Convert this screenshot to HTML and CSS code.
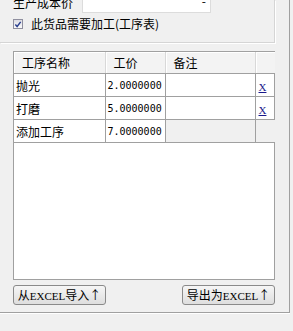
FILE: index.html
```html
<!DOCTYPE html>
<html lang="zh-CN">
<head>
    <meta charset="UTF-8">
    <meta name="viewport" content="width=device-width, initial-scale=1.0">
    <title>工序表</title>
    <link rel="stylesheet" href="styles.css">
</head>
<body>
    <div class="frame">
        <div class="top-group">
            <div class="cost-row">
                <span class="cost-label">生产成本价</span>
                <div class="cost-input"><span class="dash">-</span></div>
            </div>
            <label class="check-row">
                <span class="checkbox">
                    <svg width="9" height="9" viewBox="0 0 9 9"><path d="M1.5 4.5 L3.5 6.8 L7.5 1.5" fill="none" stroke="#2a3f8f" stroke-width="1.6"/></svg>
                </span>
                此货品需要加工(工序表)
            </label>
        </div>

        <div class="grid-box">
            <table class="grid">
                <colgroup>
                    <col class="c-name">
                    <col class="c-price">
                    <col class="c-note">
                    <col class="c-del">
                </colgroup>
                <thead>
                    <tr>
                        <th>工序名称</th>
                        <th>工价</th>
                        <th>备注</th>
                        <th></th>
                    </tr>
                </thead>
                <tbody>
                    <tr>
                        <td>抛光</td>
                        <td class="num">2.0000000</td>
                        <td></td>
                        <td class="del"><a href="#">X</a></td>
                    </tr>
                    <tr>
                        <td>打磨</td>
                        <td class="num">5.0000000</td>
                        <td></td>
                        <td class="del"><a href="#">X</a></td>
                    </tr>
                    <tr class="new-row">
                        <td>添加工序</td>
                        <td class="num">7.0000000</td>
                        <td class="off"></td>
                        <td class="off"></td>
                    </tr>
                </tbody>
            </table>
        </div>

        <div class="actions">
            <button class="btn">从<span class="en">EXCEL</span>导入↑</button>
            <button class="btn">导出为<span class="en">EXCEL</span>↑</button>
        </div>
    </div>
</body>
</html>
```

FILE: styles.css
```css
body {
    margin: 0;
    width: 293px;
    height: 331px;
    overflow: hidden;
    background-color: #f0f0f0;
    font-family: "Noto Sans CJK SC", sans-serif;
    font-size: 12px;
    color: #000;
}
.frame {
    width: 289px;
    height: 312px;
    border-right: 1px solid #a0a0a0;
    border-bottom: 1px solid #a0a0a0;
    box-shadow: 0 1px 0 #fff;
}
.top-group {
    display: flow-root;
    width: 275px;
    height: 43px;
    border-right: 1px solid #d5d5d5;
    border-bottom: 1px solid #d5d5d5;
    box-shadow: 1px 1px 0 #fff;
    box-sizing: border-box;
}
.cost-row {
    display: flex;
    align-items: center;
    margin-top: -7px;
    padding-left: 13px;
    height: 20px;
}
.cost-label {
    width: 69px;
    line-height: 14px;
}
.cost-input {
    width: 129px;
    height: 20px;
    box-sizing: border-box;
    background-color: #fff;
    border: 1px solid #dcdcdc;
    position: relative;
}
.dash {
    position: absolute;
    right: 4px;
    top: 1px;
    line-height: 12px;
}
.check-row {
    display: flex;
    align-items: center;
    margin-top: 4px;
    padding-left: 13px;
    line-height: 14px;
    gap: 8px;
}
.checkbox {
    width: 10px;
    height: 10px;
    box-sizing: border-box;
    border: 1px solid #8f8f9f;
    background: linear-gradient(#dcdce4, #fafafa);
    display: flex;
    align-items: center;
    justify-content: center;
}
.grid-box {
    margin: 8px 0 0 13px;
    width: 262px;
    height: 229px;
    box-sizing: border-box;
    border: 1px solid #a0a0a0;
    background-color: #fff;
}
.grid {
    border-collapse: collapse;
    table-layout: fixed;
    width: 261px;
}
.c-name { width: 91px; }
.c-price { width: 60px; }
.c-note { width: 90px; }
.c-del { width: 20px; }
.grid th {
    height: 21px;
    padding: 0 0 0 8px;
    text-align: left;
    font-weight: normal;
    background-color: #f3f3f3;
    border-right: 1px solid #d8d8d8;
    border-bottom: 1px solid #a0a0a0;
    box-shadow: inset 1px 1px 0 #fff;
}
.grid td {
    height: 22px;
    padding: 0 0 0 2px;
    border-right: 1px solid #a0a0a0;
    border-bottom: 1px solid #a0a0a0;
    white-space: nowrap;
    overflow: hidden;
}
.grid td:last-child,
.grid th:last-child {
    border-right: none;
}
.grid td.num {
    font-family: "DejaVu Sans Mono", monospace;
    font-size: 10px;
}
.grid td.off {
    background-color: #f0f0f0;
}
.grid td.del {
    padding-left: 3px;
}
.del a {
    color: #1a1a8c;
    font-family: "Liberation Serif", serif;
    font-size: 11px;
}
.actions {
    display: flex;
    justify-content: space-between;
    margin: 5px 0 0 13px;
    width: 262px;
}
.btn {
    width: 93px;
    height: 20px;
    padding: 0;
    border: 1px solid #8a8a8a;
    border-radius: 3px;
    background: linear-gradient(#f6f6f6, #dedede);
    font-family: "Noto Sans CJK SC", sans-serif;
    font-size: 12px;
    line-height: 16px;
    color: #000;
}
.btn .en {
    font-family: "Liberation Serif", serif;
    font-size: 11px;
}
```
